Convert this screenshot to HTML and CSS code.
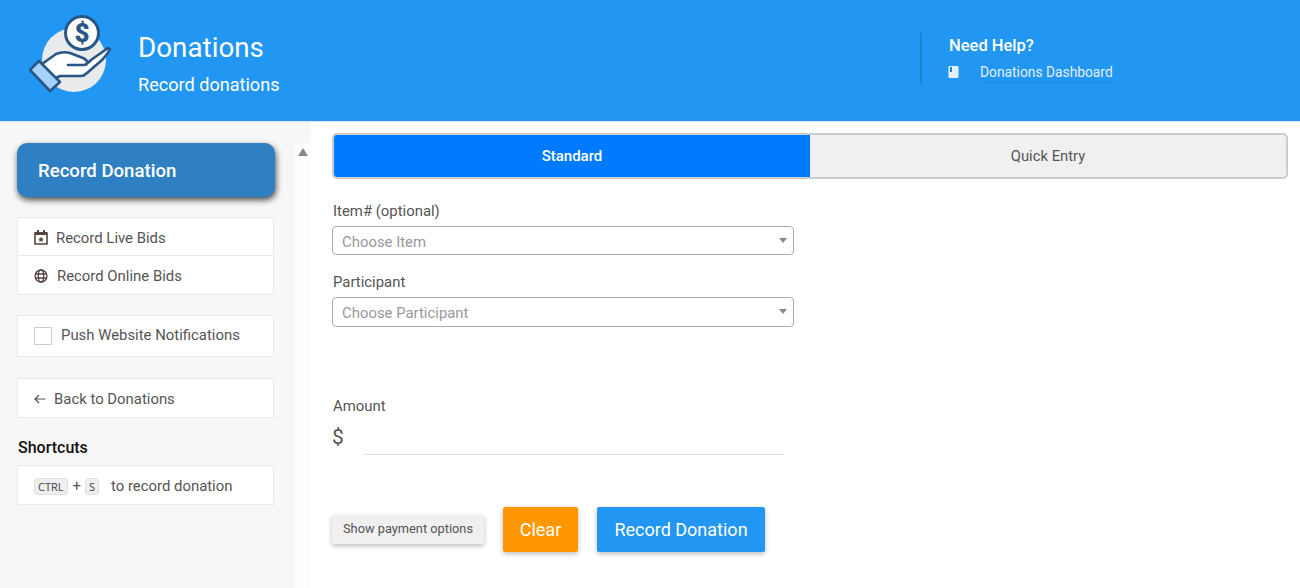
FILE: index.html
```html
<!DOCTYPE html>
<html lang="en">
<head>
<meta charset="utf-8">
<title>Donations</title>
<link rel="stylesheet" href="styles.css">
</head>
<body>
<header class="top">
  <div class="brand">
    <svg class="logo" width="90" height="84" viewBox="0 0 90 84">
      <circle cx="49" cy="50" r="32" fill="#e9eaec"/>
      <path d="M17 54 L31 44 C36 42 41 42 45 43 L58 48 C63 50 64 55 59 55 L43 55 L59 55 C61 55 63 53 66 50 L83 38 L85 39 C83 43 80 47 77 50 L62 63 C60 65 58 66 56 66 L35 66 L29 69 Z" fill="#fff" stroke="#2a5686" stroke-width="2.600" stroke-linejoin="round"/>
      <path d="M5 60 L14 51 L35 72 L25 81 Z" fill="#a6d2ff" stroke="#2a5686" stroke-width="2.600" stroke-linejoin="round"/>
      <circle cx="57" cy="23" r="16.500" fill="#fff" stroke="#2a5686" stroke-width="3"/>
      <text x="57" y="32" class="logo-dollar">$</text>
    </svg>
    <div class="titles">
      <h1>Donations</h1>
      <p>Record donations</p>
    </div>
  </div>
  <div class="help">
    <h2>Need Help?</h2>
    <div class="help-link">
      <svg class="book" width="11" height="12" viewBox="0 0 11 12"><path d="M1.500 0H9.500A1 1 0 0 1 10.500 1V11A1 1 0 0 1 9.500 12H1.500A1 1 0 0 1 .5 11V1A1 1 0 0 1 1.500 0Z" fill="#e3f0fd"/><rect x="2" y="1" width="2" height="5" fill="#2f7fd0"/></svg>
      <a>Donations Dashboard</a>
    </div>
  </div>
</header>
<div class="page">
  <aside class="side">
    <button class="side-main">Record Donation</button>
    <ul class="panel list">
      <li>
        <svg class="ico" width="14" height="15" viewBox="0 0 14 15"><path d="M1 3H13V14H1Z" fill="none" stroke="#54453f" stroke-width="1.600"/><rect x="1" y="2" width="12" height="3" fill="#54453f"/><rect x="3" y="0" width="2" height="3" fill="#54453f"/><rect x="9" y="0" width="2" height="3" fill="#54453f"/><path d="M7 6.500L7.900 8.600 10 8.700 8.400 10 8.900 12 7 10.900 5.100 12 5.600 10 4 8.700 6.100 8.600Z" fill="#54453f"/></svg>
        <span class="lbl-a">Record Live Bids</span>
      </li>
      <li>
        <svg class="ico" width="14" height="14" viewBox="0 0 14 14"><g fill="none" stroke="#54453f" stroke-width="1.300"><circle cx="7" cy="7" r="6"/><ellipse cx="7" cy="7" rx="2.700" ry="6"/><path d="M1 5H13M1 9H13"/></g></svg>
        <span>Record Online Bids</span>
      </li>
    </ul>
    <label class="panel row push"><span class="check"></span><span>Push Website Notifications</span></label>
    <div class="panel row back">
      <svg width="12" height="10" viewBox="0 0 12 10"><path d="M11.500 5H1M5 1L1 5L5 9" fill="none" stroke="#555" stroke-width="1.200"/></svg>
      <span>Back to Donations</span>
    </div>
    <h3>Shortcuts</h3>
    <div class="panel row keys">
      <kbd>CTRL</kbd><span class="plus">+</span><kbd>S</kbd><span class="keys-text">to record donation</span>
    </div>
  </aside>
  <div class="rail"><span class="rail-up"></span></div>
  <main class="main">
    <div class="tabs">
      <div class="tab on">Standard</div>
      <div class="tab">Quick Entry</div>
    </div>
    <div class="field">
      <label>Item# (optional)</label>
      <div class="select">Choose Item</div>
    </div>
    <div class="field">
      <label>Participant</label>
      <div class="select">Choose Participant</div>
    </div>
    <div class="field amount">
      <label>Amount</label>
      <div class="amount-row"><span class="cur">$</span><span class="amount-input"></span></div>
    </div>
    <div class="actions">
      <button class="btn-soft">Show payment options</button>
      <button class="btn clear">Clear</button>
      <button class="btn record">Record Donation</button>
    </div>
  </main>
</div>
</body>
</html>
```
FILE: styles.css
```css
* { box-sizing: border-box; }
html, body { margin: 0; height: 100%; overflow: hidden; }
body { font-family: Roboto, "Liberation Sans", sans-serif; color: #555; background: #fff; font-size: 14.900px; }
.top { height: 122px; background: #2196f3; border-bottom: 1px solid #d9e6f2; display: flex; color: #fff; position: relative; }
.brand { display: flex; width: 920px; padding: 10px 0 0 25px; }
.logo { display: block; }
.logo-dollar { font: 900 26px Roboto, sans-serif; fill: #2a5686; text-anchor: middle; }
.titles { margin-left: 23px; }
h1 { margin: 21px 0 0; font-size: 27.800px; font-weight: 400; line-height: 33px; }
.titles p { margin: 10px 0 0; font-size: 18.100px; line-height: 22px; }
.help { margin-top: 33px; height: 51px; border-left: 2px solid #1e82d2; padding-left: 27px; }
.help h2 { margin: 3px 0 0; font-size: 16.500px; font-weight: 500; line-height: 20px; }
.help-link { display: flex; margin-top: 8px; font-size: 13.800px; }
.help-link a { margin-left: 21px; color: #e3f0fd; border-bottom: 1px dotted #1e82d2; line-height: 17px; padding-bottom: 1px; }
.book { display: block; margin: 2px 0 0 -1px; }
.page { display: flex; height: 466px; }
.side { width: 295px; background: #f7f7f7; padding: 21px 21px 0 17px; }
.rail { width: 16px; background: linear-gradient(#f7f7f7 21px, #fdfdfd 21px); padding-top: 26px; }
.rail-up { display: block; width: 0; margin-left: 3px; border: 5px solid transparent; border-top: 0; border-bottom: 8px solid #888; }
.side-main { display: block; width: 258px; height: 54px; border: 0; border-radius: 10px; background: #2f80c3; color: #fff; font: 500 18.600px Roboto, sans-serif; text-align: left; padding: 2px 21px 0; box-shadow: 1px 3px 6px rgba(0,0,0,.7); }
.panel { background: #fff; border: 1px solid #e8e8e8; border-radius: 2px; width: 257px; list-style: none; margin: 0; padding: 0; }
.list { margin-top: 20px; }
.list li { display: flex; align-items: center; height: 37px; padding: 2px 0 0 16px; }
.list li + li { border-top: 1px solid #e8e8e8; height: 39px; }
.list li span { margin-left: 9px; }
.list li .lbl-a { margin-left: 8px; }
.ico { display: block; }
.row { display: flex; align-items: center; padding-left: 16px; }
.push { margin-top: 20px; height: 42px; padding-bottom: 2px; }
.check { width: 18px; height: 18px; background: #fff; border: 1px solid #ccc; margin: 2px 9px 0 0; }
.back { margin-top: 21px; height: 40px; padding-top: 2px; }
.back span { margin-left: 8px; }
h3 { margin: 21px 0 8px 1px; font-size: 16px; font-weight: 500; line-height: 18px; color: #111; }
.keys { height: 40px; padding-top: 2px; }
kbd { font: 11px "Open Sans", "Noto Sans", sans-serif; background: #eee; border: 1px solid #e2e2e2; border-radius: 3px; height: 17px; line-height: 16px; padding: 0 3px; color: #444; margin-top: 1px; }
.plus { margin: 0 4px 0 5px; }
.keys-text { margin-left: 12px; }
.main { flex: 1; padding: 11px 12px 0 21px; }
.tabs { display: flex; height: 46px; border: 2px solid #ccc; border-radius: 5px; background: #f0f0f0; overflow: hidden; }
.tab { flex: 1; display: flex; align-items: center; justify-content: center; font-size: 14.800px; }
.tab.on { background: #007bff; color: #fff; font-weight: 500; font-size: 15px; }
.field label { display: block; line-height: 18px; padding-left: 1px; }
.field { margin-top: 23px; width: 462px; }
.field + .field { margin-top: 18px; }
.select { margin-top: 6px; height: 29px; border: 1px solid #aaa; border-radius: 4px; color: #999; line-height: 30px; padding-left: 9px; position: relative; }
.field + .field .select { height: 30px; line-height: 31px; }
.select::after { content: ""; position: absolute; right: 6px; top: 11px; border: 4px solid transparent; border-top: 5px solid #888; border-bottom: 0; }
.field.amount { margin-top: 70px; }
.amount-row { display: flex; height: 37px; margin-top: 8px; }
.cur { font-size: 21px; line-height: 28px; width: 32px; }
.amount-input { width: 420px; border-bottom: 1px solid #ddd; height: 32px; }
.actions { display: flex; align-items: center; margin-top: 47px; }
.btn-soft { height: 29px; width: 152px; border: 0; border-radius: 2px; background: #f0f0f0; color: #555; font: 12.800px Roboto, sans-serif; padding: 0 0 2px; box-shadow: 0 2px 5px rgba(0,0,0,.26); }
.btn { height: 45px; border: 0; border-radius: 2px; color: #fff; font: 18px Roboto, sans-serif; box-shadow: 0 2px 5px rgba(0,0,0,.26); }
.clear { width: 75px; background: #ff9800; margin-left: 19px; }
.record { width: 168px; background: #2196f3; margin-left: 19px; }
```
